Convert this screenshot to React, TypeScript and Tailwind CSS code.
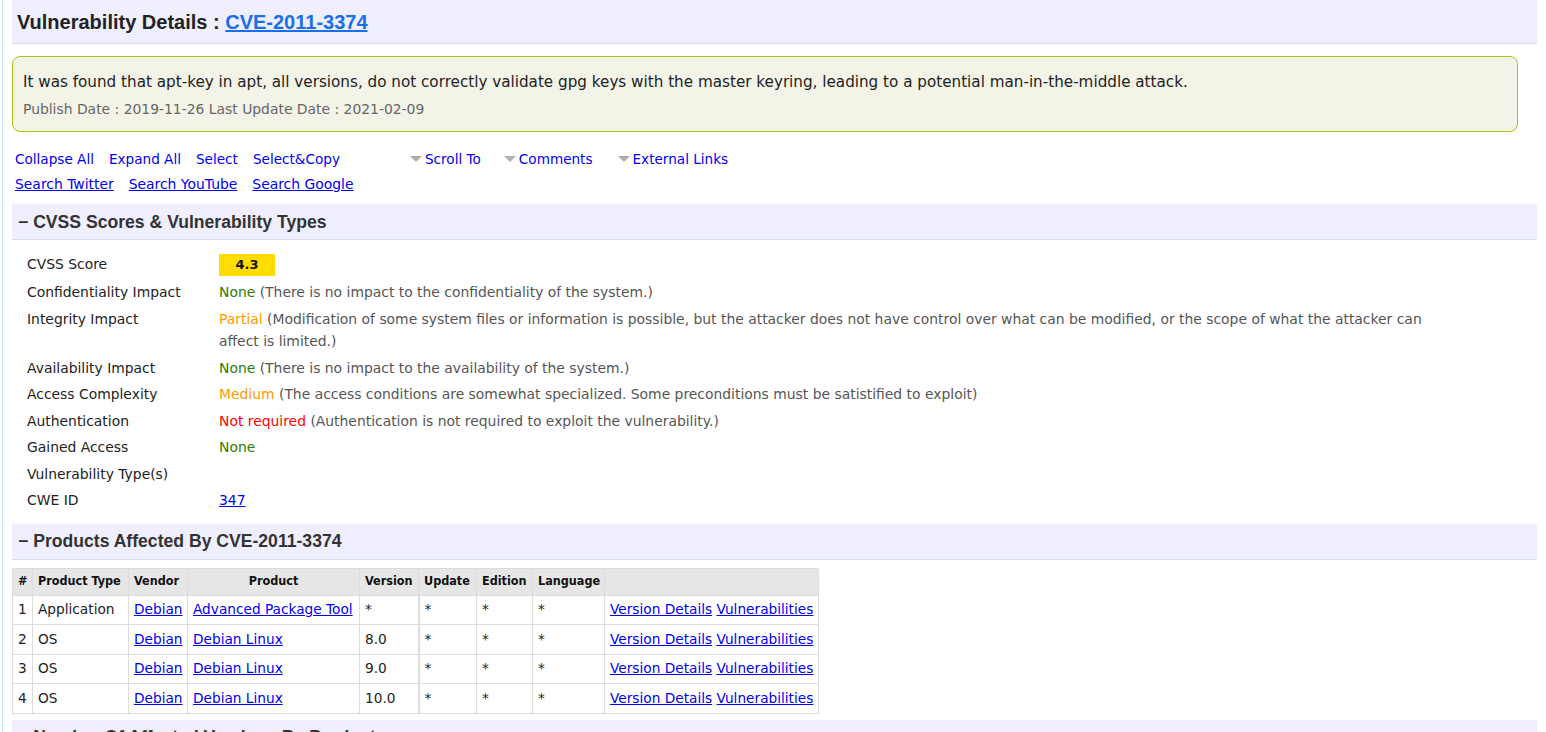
import React from "react";

const body = { fontFamily: '"DejaVu Sans", Verdana, sans-serif' };
const head = { fontFamily: '"Liberation Sans", Arial, sans-serif' };
const cond = { fontFamily: '"DejaVu Sans Condensed", "DejaVu Sans", sans-serif' };

function Tri() {
  return (
    <svg width="12" height="7" viewBox="0 0 12 7" className="mr-[3px] mt-[1px]">
      <path d="M0 0 H12 L6 6 Z" fill="#b0b0b0" />
    </svg>
  );
}

function Band({ children }: { children: React.ReactNode }) {
  return (
    <div
      className="h-[36px] bg-[#efefff] border-b border-[#dcdcf0] flex items-center pl-[6px] pt-[1px] text-[17.6px] font-bold text-[#333]"
      style={head}
    >
      {children}
    </div>
  );
}

const rows: { label: string; value?: React.ReactNode; desc?: string }[] = [
  {
    label: "Confidentiality Impact",
    value: <span className="text-[#2e7d00]">None</span>,
    desc: "(There is no impact to the confidentiality of the system.)",
  },
  {
    label: "Integrity Impact",
    value: <span className="text-[#ff9900]">Partial</span>,
    desc:
      "(Modification of some system files or information is possible, but the attacker does not have control over what can be modified, or the scope of what the attacker can affect is limited.)",
  },
  {
    label: "Availability Impact",
    value: <span className="text-[#2e7d00]">None</span>,
    desc: "(There is no impact to the availability of the system.)",
  },
  {
    label: "Access Complexity",
    value: <span className="text-[#ff9900]">Medium</span>,
    desc: "(The access conditions are somewhat specialized. Some preconditions must be satistified to exploit)",
  },
  {
    label: "Authentication",
    value: <span className="text-[#ff0000]">Not required</span>,
    desc: "(Authentication is not required to exploit the vulnerability.)",
  },
  { label: "Gained Access", value: <span className="text-[#2e7d00]">None</span> },
  { label: "Vulnerability Type(s)" },
  {
    label: "CWE ID",
    value: (
      <a href="#" className="text-[#0000ee] underline">
        347
      </a>
    ),
  },
];

const products = [
  ["1", "Application", "Debian", "Advanced Package Tool", "*"],
  ["2", "OS", "Debian", "Debian Linux", "8.0"],
  ["3", "OS", "Debian", "Debian Linux", "9.0"],
  ["4", "OS", "Debian", "Debian Linux", "10.0"],
];

const cols = ["w-[20px]", "w-[96px]", "w-[59px]", "w-[172px]", "w-[59px]", "w-[58px]", "w-[56px]", "w-[72px]", "w-[214px]"];

const cell = "border border-[#dcdcdc] px-[5px] whitespace-nowrap";

export default function App() {
  return (
    <div className="min-h-[732px] bg-white" style={body}>
      <div className="ml-[2px] border-l border-[#c8dcff] min-h-[732px] pl-[9px] w-[1535px]">
        <div
          className="h-[44px] bg-[#efefff] border-b border-[#dcdcf0] flex items-center pl-[5px] text-[20px] font-bold text-[#222]"
          style={head}
        >
          Vulnerability Details :&nbsp;
          <a href="#" className="text-[#1a6fe8] underline">
            CVE-2011-3374
          </a>
        </div>

        <div className="mt-[12px] mr-[19px] h-[76px] border border-[#a9c414] rounded-[8px] bg-[#f3f3e8] pl-[10px] pt-[13px]">
          <div className="text-[15.2px] leading-[24px] text-[#222]">
            It was found that apt-key in apt, all versions, do not correctly validate gpg keys with the master keyring,
            leading to a potential man-in-the-middle attack.
          </div>
          <div className="text-[13.9px] leading-[18px] text-[#666] mt-[6px]">
            Publish Date : 2019-11-26 Last Update Date : 2021-02-09
          </div>
        </div>

        <div className="mt-[15px] pl-[3px] text-[#0000ee]">
          <div className="flex items-center h-[25px] text-[13.6px]">
            <span>Collapse All</span>
            <span className="ml-[15px]">Expand All</span>
            <span className="ml-[15px]">Select</span>
            <span className="ml-[15px]">Select&amp;Copy</span>
            <span className="ml-[70px] flex items-center">
              <Tri />
              Scroll To
            </span>
            <span className="ml-[23px] flex items-center">
              <Tri />
              Comments
            </span>
            <span className="ml-[25px] flex items-center">
              <Tri />
              External Links
            </span>
          </div>
          <div className="flex items-center h-[25px] text-[13.9px]">
            <a href="#" className="underline">Search Twitter</a>
            <a href="#" className="underline ml-[15px]">Search YouTube</a>
            <a href="#" className="underline ml-[15px]">Search Google</a>
          </div>
        </div>

        <div className="mt-[7px]">
          <Band>− CVSS Scores &amp; Vulnerability Types</Band>
        </div>

        <div className="mt-[10px] pl-[15px] text-[13.9px]">
          <div className="flex items-center py-[3px] h-[29px]">
            <div className="w-[192px] text-[#222]">CVSS Score</div>
            <div className="w-[56px] h-[22px] bg-[#ffdd00] flex items-center justify-center font-bold text-[13px] text-[#111]">
              4.3
            </div>
          </div>
          {rows.map((r) => (
            <div key={r.label} className="flex py-[2px] leading-[22.5px]">
              <div className="w-[192px] shrink-0 text-[#222]">{r.label}</div>
              <div className="w-[1205px] text-[#555]">
                {r.value}
                {r.desc ? <span> {r.desc}</span> : null}
              </div>
            </div>
          ))}
        </div>

        <div className="mt-[10px]">
          <Band>− Products Affected By CVE-2011-3374</Band>
        </div>

        <table className="mt-[8px] table-fixed w-[807px] border-collapse text-[13.7px] text-[#222] border border-[#dcdcdc]">
          <thead>
            <tr className="bg-[#e6e6e6] h-[27px] text-[12.5px] font-bold text-[#111]" style={cond}>
              {["#", "Product Type", "Vendor", "Product", "Version", "Update", "Edition", "Language", ""].map((h, i) => (
                <th
                  key={i}
                  className={`${cols[i]} ${cell} ${i === 0 ? "px-[3px]" : ""} ${i === 3 ? "text-center" : "text-left"} font-bold`}
                >
                  {h}
                </th>
              ))}
            </tr>
          </thead>
          <tbody>
            {products.map((p) => (
              <tr key={p[0]} className="h-[29.5px]">
                <td className={`${cell} px-[3px]`}>{p[0]}</td>
                <td className={cell}>{p[1]}</td>
                <td className={cell}>
                  <a href="#" className="text-[#0000ee] underline">{p[2]}</a>
                </td>
                <td className={cell}>
                  <a href="#" className="text-[#0000ee] underline">{p[3]}</a>
                </td>
                <td className={`${cell} border-r-2`}>{p[4]}</td>
                <td className={cell}>*</td>
                <td className={cell}>*</td>
                <td className={cell}>*</td>
                <td className={cell}>
                  <a href="#" className="text-[#0000ee] underline">Version Details</a>{" "}
                  <a href="#" className="text-[#0000ee] underline">Vulnerabilities</a>
                </td>
              </tr>
            ))}
          </tbody>
        </table>

        <div className="mt-[6px]">
          <Band>− Number Of Affected Versions By Product</Band>
        </div>
      </div>
    </div>
  );
}
